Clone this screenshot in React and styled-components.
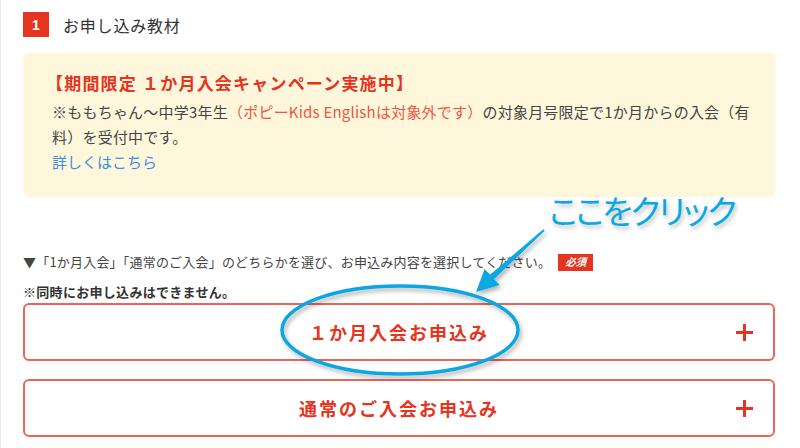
import React from 'react'
import styled, { createGlobalStyle } from 'styled-components'

const Global = createGlobalStyle`
  html, body { margin: 0; padding: 0; background: #fff; }
  body { font-family: "Noto Sans CJK JP", "Noto Sans", sans-serif; color: #333; }
`

const Page = styled.div`
  position: relative;
  width: 800px; height: 448px;
  box-sizing: border-box;
  padding: 12px 0 0 23px;
  border-left: 1px solid #ececec;
  overflow: hidden;
`
const Section = styled.div`
  width: 752px;
  margin-left: -1px;
`
const Heading = styled.div`
  display: flex; align-items: center; gap: 14px;
  height: 25px;
`
const Num = styled.span`
  width: 26px; height: 25px;
  background: #e5341f; color: #fff;
  display: flex; align-items: center; justify-content: center;
  font: bold 14px "Liberation Sans", sans-serif;
`
const Title = styled.h2`
  margin: 0; font-size: 16px; font-weight: normal; color: #333; letter-spacing: 0.8px;
`
const Notice = styled.div`
  margin-top: 16px;
  background: #fff7dc;
  border-radius: 5px;
  padding: 18px 20px 20px 29px;
  height: 144px; box-sizing: border-box;
`
const NoticeTitle = styled.div`
  color: #e5341f; font-size: 17px; font-weight: bold; line-height: 24px;
  letter-spacing: 1.2px;
  margin-left: -6px; margin-bottom: 4px;
`
const NoticeText = styled.div`
  font-size: 15px; line-height: 25px; color: #444; white-space: nowrap;
  letter-spacing: 0.22px;
`
const Accent = styled.span`
  color: #f0553f;
`
const More = styled.a`
  color: #3b8de3; text-decoration: none; font-size: 15px; line-height: 25px;
`
const Guide = styled.div`
  margin-top: 55px;
  display: flex; align-items: center; gap: 7px;
  font-size: 13px; line-height: 20px; color: #444; letter-spacing: 0.2px;
`
const Badge = styled.span`
  background: #e5341f; color: #fff;
  font-size: 10.5px; font-weight: bold; font-style: italic; letter-spacing: 0;
  width: 35px; height: 17px;
  display: inline-flex; align-items: center; justify-content: center;
`
const Caution = styled.div`
  font-size: 13px; font-weight: bold; line-height: 20px; color: #333; margin-top: 10px;
  letter-spacing: 0.3px;
`
const Options = styled.div`
  display: flex; flex-direction: column; gap: 18px; margin-top: 1px;
`
const Option = styled.button`
  position: relative;
  height: 58px; width: 752px;
  background: #fff;
  border: 2px solid #ee6555; border-radius: 6px;
  display: flex; align-items: center; justify-content: center;
  color: #e5341f; font-family: inherit;
  font-size: 18px; font-weight: bold; letter-spacing: 2px;
  cursor: pointer;
`
const Plus = styled.span`
  position: absolute; right: 20px; top: 50%;
  width: 17px; height: 17px; margin-top: -8px;
  &::before, &::after {
    content: ''; position: absolute; background: #e5341f;
  }
  &::before { left: 0; right: 0; top: 7px; height: 3px; }
  &::after { top: 0; bottom: 0; left: 7px; width: 3px; }
`
const Callout = styled.div`
  position: absolute; left: 548px; top: 187px;
  color: #06a9e6; font-size: 33px; line-height: 46px;
  font-feature-settings: "palt";
  letter-spacing: -2px;
  text-shadow: 2px 3px 4px rgba(0,0,0,0.25);
`
const Overlay = styled.svg`
  position: absolute; left: 0; top: 0; pointer-events: none;
`

export default function App() {
  return (
    <Page>
      <Global />
      <Section>
        <Heading>
          <Num>1</Num>
          <Title>お申し込み教材</Title>
        </Heading>
        <Notice>
          <NoticeTitle>【期間限定 １か月入会キャンペーン実施中】</NoticeTitle>
          <NoticeText>
            ※ももちゃん〜中学3年生<Accent>（ポピーKids Englishは対象外です）</Accent>の対象月号限定で1か月からの入会（有<br />
            料）を受付中です。
          </NoticeText>
          <More href="#">詳しくはこちら</More>
        </Notice>
        <Guide>
          <span>▼「1か月入会」「通常のご入会」のどちらかを選び、お申込み内容を選択してください。</span>
          <Badge>必須</Badge>
        </Guide>
        <Caution>※同時にお申し込みはできません。</Caution>
        <Options>
          <Option>１か月入会お申込み<Plus /></Option>
          <Option>通常のご入会お申込み<Plus /></Option>
        </Options>
      </Section>
      <Callout>ここをクリック</Callout>
      <Overlay width="800" height="448" viewBox="0 0 800 448">
        <defs>
          <filter id="sh" x="-20%" y="-20%" width="140%" height="140%">
            <feDropShadow dx="2" dy="3" stdDeviation="2" floodColor="#000" floodOpacity="0.3" />
          </filter>
        </defs>
        <g filter="url(#sh)">
          <polygon
            fill="#08a8e4"
            points="543.7,230.7 493,279.2 498.7,285 475,292 483.6,268.9 489,274.8 542.3,229.3"
          />
          <ellipse cx="399" cy="330" rx="118" ry="44" fill="none" stroke="#0aa6e2" strokeWidth="3.5" />
        </g>
      </Overlay>
    </Page>
  )
}
